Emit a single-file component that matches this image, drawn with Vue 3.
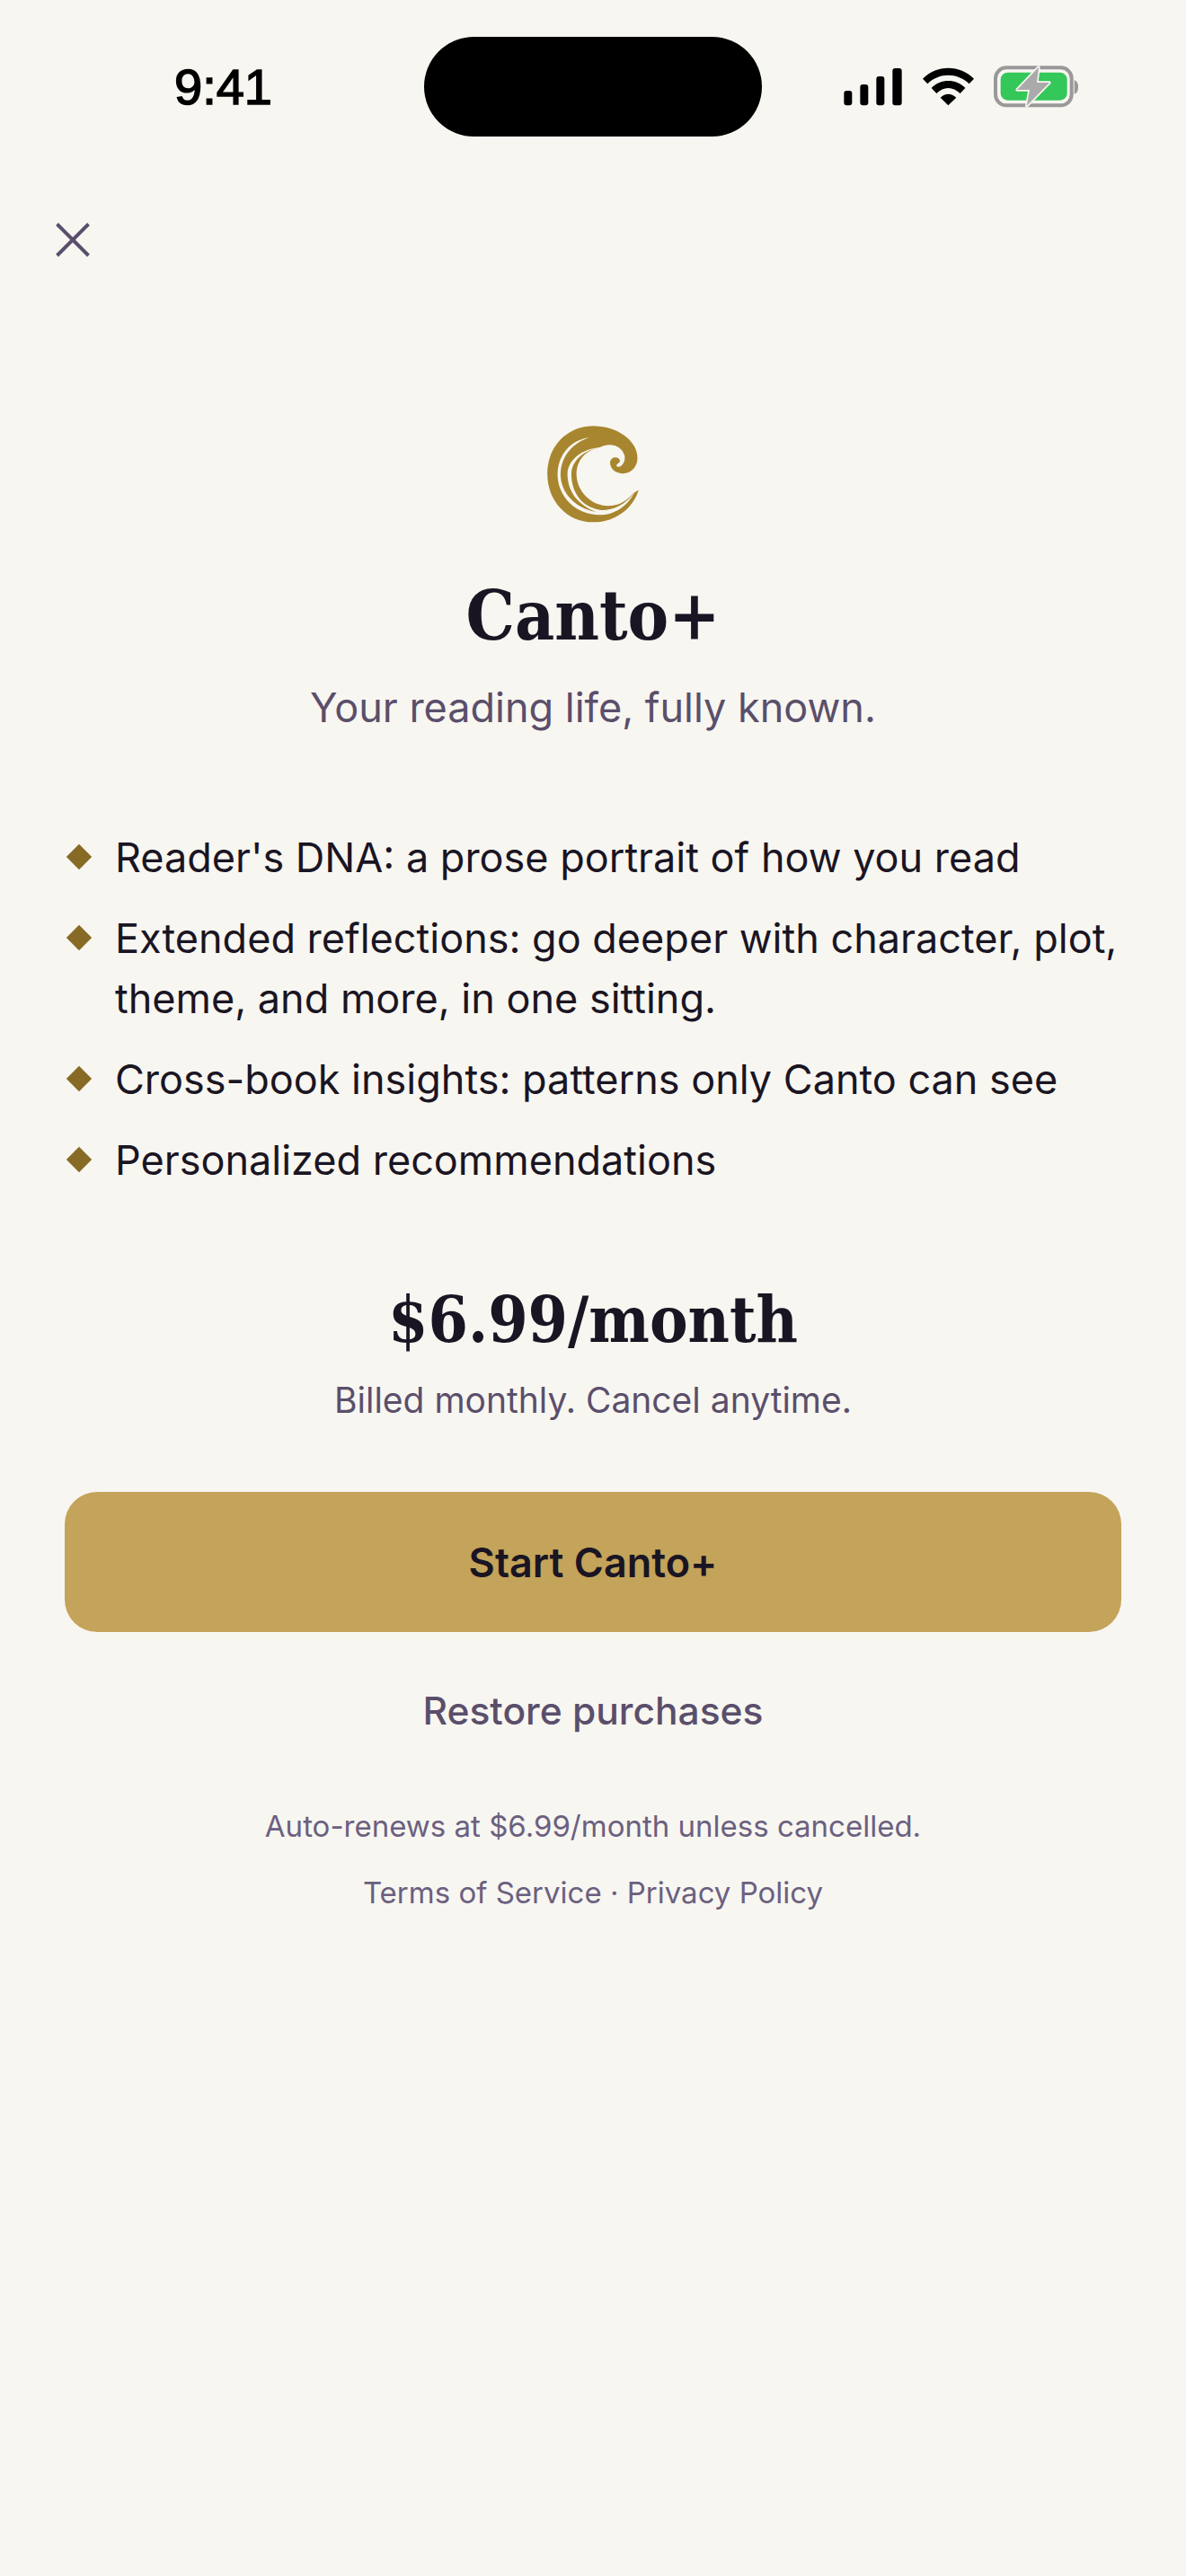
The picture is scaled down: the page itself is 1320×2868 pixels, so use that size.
<template>
  <div class="screen">
    <!-- Status bar -->
    <header class="status">
      <span class="time">9:41</span>
      <div class="island"></div>
      <svg class="status-icons" viewBox="0 0 1080 330" width="360" height="110">
        <rect x="172" y="183" width="27" height="49" rx="9" fill="#000"/>
        <rect x="226" y="162" width="27" height="70" rx="9" fill="#000"/>
        <rect x="280" y="135" width="27" height="97" rx="9" fill="#000"/>
        <rect x="334" y="108" width="31" height="124" rx="9" fill="#000"/>
        <path d="M435 143 C480 95 560 95 606 143 L590 160 C550 122 490 122 451 160 Z" fill="#000"/>
        <path d="M464 174 C495 142 546 142 577 174 L560 192 C535 168 505 168 481 192 Z" fill="#000"/>
        <path d="M494 206 C510 190 530 190 547 206 L520 232 Z" fill="#000"/>
        <rect x="678" y="106" width="254" height="126" rx="36" fill="none" stroke="#999" stroke-width="12"/>
        <rect x="695" y="122" width="222" height="93" rx="24" fill="#34c759"/>
        <path d="M941 148 C950 150 954 160 954 171 C954 182 950 192 941 194 Z" fill="#999"/>
        <path d="M822 104 L750 180 L792 180 L782 234 L858 156 L816 156 Z" fill="#aaa" stroke="#f8f6f1" stroke-width="10" stroke-linejoin="round" paint-order="stroke"/>
      </svg>
    </header>

    <button class="close" aria-label="Close">
      <svg viewBox="0 0 38 38" width="38" height="38">
        <path d="M1.5 1.5 L36.5 36.5 M36.5 1.5 L1.5 36.5" fill="none" stroke="#5a4f6b" stroke-width="4"/>
      </svg>
    </button>

    <main class="content">
      <svg class="logo" viewBox="85 68 310 326" width="104" height="109">
        <path fill="#a8862f" fill-rule="evenodd" d="M392 285 C372 350 310 394 240 392 C152 392 88 320 88 230 C88 140 155 72 240 72 C320 72 388 120 388 178 C388 210 365 232 335 230 C312 228 296 212 297 193 C298 180 310 174 320 177 C328 180 331 186 329 191 C326 196 318 198 318 205 C330 215 350 195 345 170 C335 135 295 125 262 143 C210 155 185 190 185 232 C185 290 235 338 290 338 C325 338 352 322 374 296 Z M228 110 C165 118 122 170 122 232 C122 310 185 368 262 368 C310 368 355 340 378 292 C350 332 310 352 268 352 C205 345 168 295 168 232 C168 190 205 155 262 143 C195 150 155 190 155 232 C155 290 190 335 250 358 C180 345 132 295 132 232 C132 175 172 128 228 110 Z"/>
      </svg>
      <h1 class="title">Canto+</h1>
      <p class="tagline">Your reading life, fully known.</p>

      <ul class="features">
        <li v-for="f in features" :key="f">
          <span class="diamond"></span>
          <span>{{ f }}</span>
        </li>
      </ul>

      <div class="price">$6.99/month</div>
      <p class="billed">Billed monthly. Cancel anytime.</p>

      <button class="cta">Start Canto+</button>
      <button class="restore">Restore purchases</button>

      <p class="legal">Auto-renews at $6.99/month unless cancelled.</p>
      <p class="legal links">Terms of Service · Privacy Policy</p>
    </main>
  </div>
</template>

<script setup>
const features = [
  "Reader's DNA: a prose portrait of how you read",
  'Extended reflections: go deeper with character, plot, theme, and more, in one sitting.',
  'Cross-book insights: patterns only Canto can see',
  'Personalized recommendations',
]
</script>

<style>
html, body {
  margin: 0;
  background: #f8f6f1;
}
</style>

<style scoped>
.screen {
  width: 1320px;
  height: 2868px;
  background: #f8f6f1;
  font-family: Inter, "Liberation Sans", sans-serif;
  color: #1a1523;
  overflow: hidden;
}

/* Status bar */
.status {
  display: flex;
  align-items: flex-start;
  height: 150px;
  padding-top: 41px;
  box-sizing: border-box;
}
.time {
  width: 472px;
  box-sizing: border-box;
  padding-left: 194px;
  font-family: "Liberation Sans", sans-serif;
  font-size: 56px;
  line-height: 111px;
  color: #000;
  -webkit-text-stroke: 1.5px #000;
}
.island {
  width: 376px;
  height: 111px;
  border-radius: 56px;
  background: #000;
  flex: none;
}
.status-icons {
  margin-left: 34px;
  margin-top: -1px;
  flex: none;
}

.close {
  display: block;
  margin: 98px 0 0 62px;
  padding: 0;
  border: none;
  background: none;
  line-height: 0;
}

.content {
  display: flex;
  flex-direction: column;
  align-items: center;
  padding: 187px 72px 0;
}
.logo {
  display: block;
}
.title {
  margin: 49px 0 0;
  font-family: "DejaVu Serif", serif;
  font-stretch: condensed;
  font-size: 76px;
  line-height: 110px;
  font-weight: 700;
}
.tagline {
  margin: 14px 0 0;
  font-size: 45px;
  line-height: 66px;
  color: #5a4f6b;
}

.features {
  list-style: none;
  align-self: stretch;
  margin: 100px 0 0;
  padding: 0;
  display: flex;
  flex-direction: column;
  gap: 23px;
  font-size: 45px;
  line-height: 67px;
}
.features li {
  display: flex;
  gap: 26px;
}
.diamond {
  flex: none;
  width: 20px;
  height: 20px;
  margin: 23px 4px 0 6px;
  background: #876a26;
  transform: rotate(45deg);
}

.price {
  margin-top: 96px;
  font-family: "DejaVu Serif", serif;
  font-stretch: condensed;
  font-size: 71px;
  line-height: 96px;
  font-weight: 700;
}
.billed {
  margin: 12px 0 0;
  font-size: 39px;
  line-height: 60px;
  color: #5a4f6b;
}

.cta {
  align-self: stretch;
  height: 156px;
  margin-top: 72px;
  border: none;
  border-radius: 36px;
  background: #c4a35a;
  color: #1a1523;
  font-family: inherit;
  font-size: 45px;
  font-weight: 600;
}
.restore {
  margin-top: 56px;
  padding: 0;
  border: none;
  background: none;
  color: #5a4f6b;
  font-family: inherit;
  font-size: 42.5px;
  font-weight: 500;
  line-height: 64px;
}
.legal {
  margin: 71px 0 0;
  font-size: 33px;
  line-height: 50px;
  color: #6b6080;
}
.links {
  margin-top: 24px;
}
</style>
